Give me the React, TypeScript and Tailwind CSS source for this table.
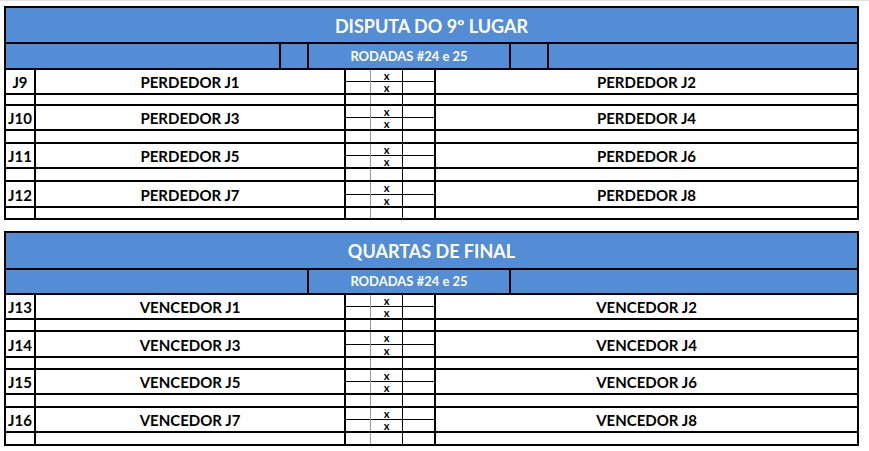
import React from "react";

type Match = { id: string; home: string; away: string; h: number; gap: number };

const font = { fontFamily: "Lato, 'Open Sans', sans-serif" };

function MatchRow({ m }: { m: Match }) {
  return (
    <>
      {/* linha do jogo */}
      <div className="flex border-b-2 border-black" style={{ height: m.h }}>
        <div className="w-[30px] shrink-0 border-r-2 border-black flex items-center justify-center pt-[2px] whitespace-nowrap text-[15px] font-bold text-black">
          {m.id}
        </div>
        <div className="w-[310px] shrink-0 border-r-2 border-black flex items-center justify-center pt-[2px] text-[15px] font-bold text-black">
          {m.home}
        </div>
        <div className="w-[25px] shrink-0 border-r border-[#9a9a9a] flex flex-col">
          <div className="flex-1 border-b border-black" />
          <div className="flex-1" />
        </div>
        <div className="w-[32px] shrink-0 border-r border-black flex flex-col">
          <div className="flex-1 border-b border-black flex items-center justify-center text-[11px] leading-none font-bold text-black">x</div>
          <div className="flex-1 flex items-center justify-center text-[11px] leading-none font-bold text-black">x</div>
        </div>
        <div className="w-[33px] shrink-0 border-r-2 border-black flex flex-col">
          <div className="flex-1 border-b border-black" />
          <div className="flex-1" />
        </div>
        <div className="flex-1 flex items-center justify-center pt-[2px] text-[15px] font-bold text-black">
          {m.away}
        </div>
      </div>
      {/* linha vazia */}
      <div className="flex border-b-2 border-black" style={{ height: m.gap }}>
        <div className="w-[30px] shrink-0 border-r-2 border-black" />
        <div className="w-[310px] shrink-0 border-r-2 border-black" />
        <div className="w-[25px] shrink-0 border-r border-[#9a9a9a]" />
        <div className="w-[32px] shrink-0 border-r border-black" />
        <div className="w-[33px] shrink-0 border-r-2 border-black" />
        <div className="flex-1" />
      </div>
    </>
  );
}

function Bracket({
  title,
  titleH,
  subH,
  split,
  matches,
}: {
  title: string;
  titleH: number;
  subH: number;
  split: boolean;
  matches: Match[];
}) {
  return (
    <div className="w-[855px] border-l-2 border-t-2 border-r-2 border-black">
      {/* título */}
      <div
        className="bg-[#538dd5] border-b-2 border-black flex items-center justify-center pt-[2px] text-white text-[18px] font-bold"
        style={{ height: titleH }}
      >
        {title}
      </div>

      {/* rodadas */}
      <div className="flex bg-[#538dd5] border-b-2 border-black" style={{ height: subH }}>
        {split ? (
          <>
            <div className="w-[275px] border-r-2 border-black" />
            <div className="w-[28px] border-r-2 border-black" />
          </>
        ) : (
          <div className="w-[303px] border-r-2 border-black" />
        )}
        <div className="w-[202px] border-r-2 border-black flex items-center justify-center pt-[1px] text-white text-[13px] font-bold">
          RODADAS #24 e 25
        </div>
        {split && <div className="w-[38px] border-r-2 border-black" />}
        <div className="flex-1" />
      </div>

      {matches.map((m) => (
        <MatchRow key={m.id} m={m} />
      ))}
    </div>
  );
}

export default function App() {
  const losers: Match[] = [
    { id: "J9", home: "PERDEDOR J1", away: "PERDEDOR J2", h: 25, gap: 11 },
    { id: "J10", home: "PERDEDOR J3", away: "PERDEDOR J4", h: 25, gap: 13 },
    { id: "J11", home: "PERDEDOR J5", away: "PERDEDOR J6", h: 25, gap: 13 },
    { id: "J12", home: "PERDEDOR J7", away: "PERDEDOR J8", h: 26, gap: 12 },
  ];
  const quarters: Match[] = [
    { id: "J13", home: "VENCEDOR J1", away: "VENCEDOR J2", h: 25, gap: 12 },
    { id: "J14", home: "VENCEDOR J3", away: "VENCEDOR J4", h: 26, gap: 12 },
    { id: "J15", home: "VENCEDOR J5", away: "VENCEDOR J6", h: 25, gap: 13 },
    { id: "J16", home: "VENCEDOR J7", away: "VENCEDOR J8", h: 25, gap: 13 },
  ];

  return (
    <div className="w-[869px] h-[451px] bg-white border-t border-[#e2e2e2] pl-[4px] pt-[5px]" style={font}>
      <Bracket title="DISPUTA DO 9º LUGAR" titleH={36} subH={26} split matches={losers} />
      <div className="h-[11px]" />
      <Bracket title="QUARTAS DE FINAL" titleH={37} subH={25} split={false} matches={quarters} />
    </div>
  );
}
